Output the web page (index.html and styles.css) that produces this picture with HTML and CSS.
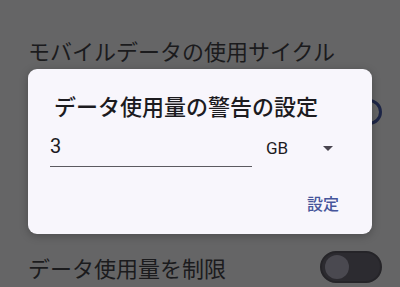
FILE: index.html
```html
<!DOCTYPE html>
<html lang="ja">
<head>
    <meta charset="UTF-8">
    <meta name="viewport" content="width=device-width, initial-scale=1.0">
    <title>データ使用量の警告</title>
    <link rel="stylesheet" href="styles.css">
</head>
<body>
    <div class="settings">
        <div class="row row-cycle">
            <p class="row-title">モバイルデータの使用サイクル</p>
        </div>
        <div class="row row-warning">
            <div class="switch switch-on"><span class="thumb"></span></div>
        </div>
        <div class="row row-hidden"></div>
        <div class="row row-limit">
            <p class="row-title">データ使用量を制限</p>
            <div class="switch switch-off"><span class="thumb"></span></div>
        </div>
    </div>

    <div class="dialog">
        <h2 class="dialog-title">データ使用量の警告の設定</h2>
        <div class="input-row">
            <div class="amount">3</div>
            <div class="unit">
                <span>GB</span>
                <span class="arrow"></span>
            </div>
        </div>
        <div class="actions">
            <button class="text-button">設定</button>
        </div>
    </div>
</body>
</html>
```

FILE: styles.css
```css
html, body {
    margin: 0;
    padding: 0;
}

body {
    width: 400px;
    height: 287px;
    overflow: hidden;
    position: relative;
    background-color: #656566;
    font-family: "Noto Sans CJK JP", Roboto, sans-serif;
    color: #1b1b1d;
}

.settings {
    display: flex;
    flex-direction: column;
    padding: 20px 18px 0 28px;
}

.row {
    display: flex;
    align-items: center;
    justify-content: space-between;
}

.row-cycle {
    height: 60px;
}

.row-warning {
    height: 64px;
    justify-content: flex-end;
}

.row-hidden {
    height: 92px;
}

.row-limit {
    height: 62px;
}

.row-title {
    margin: 0;
    font-size: 22px;
    line-height: 28px;
}

.switch {
    position: relative;
    width: 62px;
    height: 32px;
    border-radius: 16px;
    box-sizing: border-box;
}

.switch-off {
    background-color: #2c2b30;
    border: 2px solid #252428;
}

.switch-off .thumb {
    position: absolute;
    left: 3px;
    top: 2px;
    width: 24px;
    height: 24px;
    border-radius: 50%;
    background-color: #4a4950;
}

.switch-on .thumb {
    position: absolute;
    right: 0;
    top: 3px;
    width: 26px;
    height: 26px;
    border-radius: 50%;
    box-sizing: border-box;
    border: 3px solid #1d2546;
}

.dialog {
    position: absolute;
    left: 28px;
    top: 69px;
    width: 344px;
    height: 165px;
    box-sizing: border-box;
    padding: 20px 32px 0 22px;
    background-color: #f8f6fc;
    border-radius: 9px;
    box-shadow: 0 2px 8px rgba(0, 0, 0, 0.25);
}

.dialog-title {
    margin: 0 0 0 4px;
    font-size: 22px;
    font-weight: 500;
    line-height: 32px;
    color: #1c1b1f;
}

.input-row {
    display: flex;
    align-items: center;
    margin-top: 10px;
}

.amount {
    width: 202px;
    height: 36px;
    box-sizing: border-box;
    border-bottom: 1px solid #5b5a60;
    font-family: Roboto, sans-serif;
    font-size: 20px;
    line-height: 30px;
    color: #1c1b1f;
}

.unit {
    display: flex;
    align-items: center;
    justify-content: space-between;
    width: 67px;
    margin-left: 14px;
    margin-bottom: 2px;
    font-family: Roboto, sans-serif;
    font-size: 17px;
    color: #1c1b1f;
}

.arrow {
    width: 0;
    height: 0;
    border-left: 5px solid transparent;
    border-right: 5px solid transparent;
    border-top: 5px solid #49454f;
}

.actions {
    display: flex;
    justify-content: flex-end;
    margin-top: 24px;
    padding-right: 1px;
}

.text-button {
    padding: 0;
    border: none;
    background: none;
    font-family: "Noto Sans CJK JP", sans-serif;
    font-size: 16px;
    font-weight: 500;
    line-height: 24px;
    color: #46559b;
}
```
